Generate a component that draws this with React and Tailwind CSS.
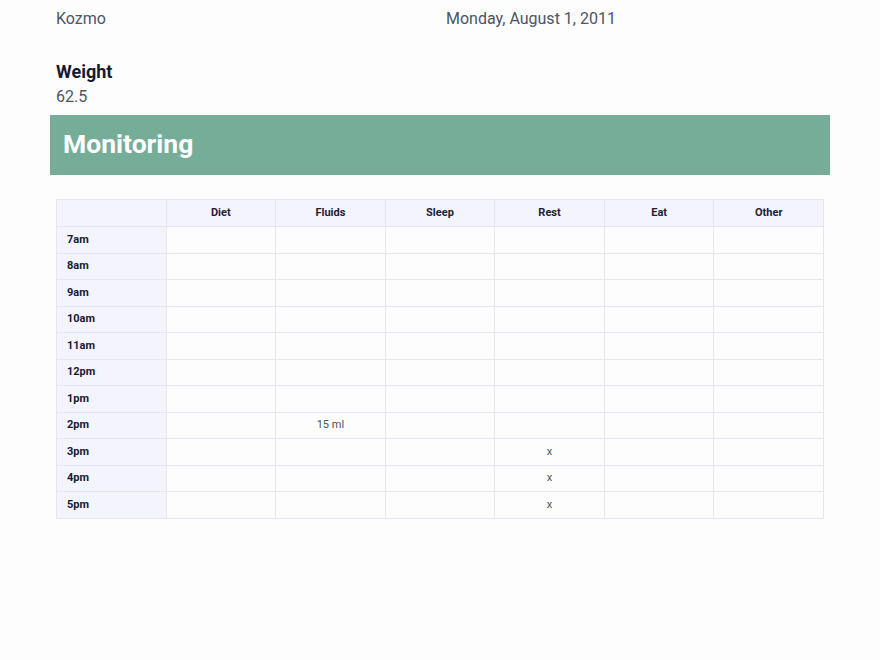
import React from "react";

const cols = ["Diet", "Fluids", "Sleep", "Rest", "Eat", "Other"];
const rows = [
  ["7am", {}],
  ["8am", {}],
  ["9am", {}],
  ["10am", {}],
  ["11am", {}],
  ["12pm", {}],
  ["1pm", {}],
  ["2pm", { Fluids: "15 ml" }],
  ["3pm", { Rest: "x" }],
  ["4pm", { Rest: "x" }],
  ["5pm", { Rest: "x" }],
];

export default function App() {
  return (
    <div
      className="w-[880px] h-[660px] overflow-hidden bg-[#fdfdfe]"
      style={{ fontFamily: "Roboto, 'Noto Sans', sans-serif" }}
    >
      <div className="px-[50px] mt-[-19px]">
        <div className="px-[6px] grid grid-cols-[390px_1fr]">
          <div>
            <div className="text-[18px] font-bold leading-[26px] text-[#141a33]">Name</div>
            <div className="text-[16px] leading-[24px] text-[#4b5563]">Kozmo</div>
          </div>
          <div>
            <div className="text-[18px] font-bold leading-[26px] text-[#141a33]">Birth Date</div>
            <div className="text-[16px] leading-[24px] text-[#4b5563]">Monday, August 1, 2011</div>
          </div>
          <div className="mt-[28px]">
            <div className="text-[18px] font-bold leading-[26px] text-[#141a33]">Weight</div>
            <div className="text-[16px] leading-[24px] text-[#4b5563]">62.5</div>
          </div>
        </div>
        <div className="mt-[6px] h-[60px] bg-[#76ad99] flex items-center px-[13px] pb-[3px]">
          <span className="text-[26.5px] font-bold text-white">Monitoring</span>
        </div>
        <div className="px-[6px] mt-[24px]">
          <table className="w-full border-collapse table-fixed text-[11px]">
            <thead>
              <tr className="h-[27px]">
                <th className="border border-[#e4e6f1] bg-[#f4f4fd]"></th>
                {cols.map((c) => (
                  <th
                    key={c}
                    className="border border-[#e4e6f1] bg-[#f4f4fd] font-bold text-[#1c2233] text-center"
                  >
                    {c}
                  </th>
                ))}
              </tr>
            </thead>
            <tbody>
              {rows.map(([label, vals]) => (
                <tr key={label} className="h-[26.5px]">
                  <td className="border border-[#e4e6f1] bg-[#f4f4fd] font-bold text-[#141a33] pl-[10px]">
                    {label}
                  </td>
                  {cols.map((c) => (
                    <td
                      key={c}
                      className="border border-[#e4e6f1] text-center text-[#4b5563]"
                    >
                      {vals[c] || ""}
                    </td>
                  ))}
                </tr>
              ))}
            </tbody>
          </table>
        </div>
      </div>
    </div>
  );
}
